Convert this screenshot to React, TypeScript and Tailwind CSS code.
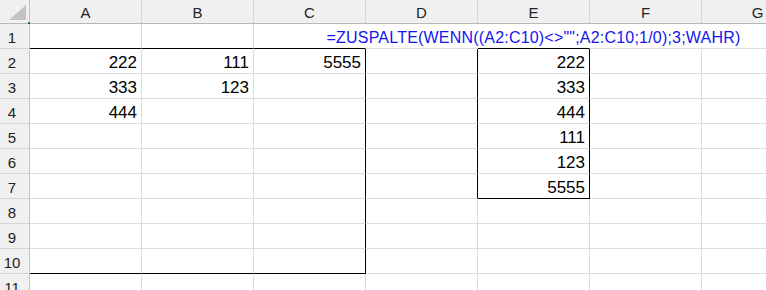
import React from "react";

const COLS = ["A", "B", "C", "D", "E", "F", "G"];
const ROWS = [1, 2, 3, 4, 5, 6, 7, 8, 9, 10, 11];

const DATA: Record<string, string> = {
  A2: "222",
  B2: "111",
  C2: "5555",
  A3: "333",
  B3: "123",
  A4: "444",
  E2: "222",
  E3: "333",
  E4: "444",
  E5: "111",
  E6: "123",
  E7: "5555",
};

function rightClass(c: number, r: number): string {
  if (r === 1 && c >= 2 && c <= 5) return "border-r-transparent";
  if (c === 2 && r >= 2 && r <= 10) return "border-r-black";
  if ((c === 3 || c === 4) && r >= 2 && r <= 7) return "border-r-black";
  return "border-r-[#dcdcdc]";
}

function bottomClass(c: number, r: number): string {
  if (r === 1 && (c <= 2 || c === 4)) return "border-b-black";
  if (r === 10 && c <= 2) return "border-b-black";
  if (r === 7 && c === 4) return "border-b-black";
  return "border-b-[#dcdcdc]";
}

export default function App() {
  return (
    <div
      className="w-[766px] h-[290px] overflow-hidden bg-white text-black"
      style={{ fontFamily: '"Liberation Sans", Arial, sans-serif' }}
    >
      <div className="grid grid-cols-[30px_112px_112px_112px_112px_112px_112px_112px] grid-rows-[24px_repeat(11,25px)] w-[814px]">
        {/* corner */}
        <div className="relative bg-[#f0f0f0] border-r border-b border-r-[#c4c4c4] border-b-[#b8b8b8]">
          <svg width="29" height="23" className="absolute left-0 top-0">
            <polygon points="9,20 26,20 26,5" fill="#c2c2c2" />
          </svg>
          <div className="absolute right-[-1px] bottom-[-1px] w-[2px] h-[2px] bg-[#217346]" />
        </div>
        {COLS.map((c) => (
          <div
            key={c}
            className="bg-[#f0f0f0] border-r border-b border-r-[#d4d4d4] border-b-[#b8b8b8] flex items-center justify-center pt-[2px] text-[15px] leading-none text-[#222]"
          >
            {c}
          </div>
        ))}
        {ROWS.map((r) => (
          <React.Fragment key={r}>
            <div className="bg-[#f0f0f0] border-r border-b border-r-[#c4c4c4] border-b-[#d4d4d4] flex items-center justify-center pr-[5px] pt-[2px] text-[15px] leading-none text-[#222]">
              {r}
            </div>
            {COLS.map((c, ci) => {
              const key = `${c}${r}`;
              const val = DATA[key];
              const isFormula = key === "E1";
              return (
                <div
                  key={key}
                  className={`border-r border-b ${rightClass(ci, r)} ${bottomClass(ci, r)} flex items-center ${
                    isFormula ? "justify-center overflow-visible" : "justify-end pr-[4px]"
                  } pt-[3px]`}
                >
                  {isFormula ? (
                    <span className="whitespace-nowrap text-[16px] tracking-[0.2px] leading-none text-[#1414f0]">
                      =ZUSPALTE(WENN((A2:C10)&lt;&gt;"";A2:C10;1/0);3;WAHR)
                    </span>
                  ) : val ? (
                    <span className="text-[17px] leading-none">{val}</span>
                  ) : null}
                </div>
              );
            })}
          </React.Fragment>
        ))}
      </div>
    </div>
  );
}
